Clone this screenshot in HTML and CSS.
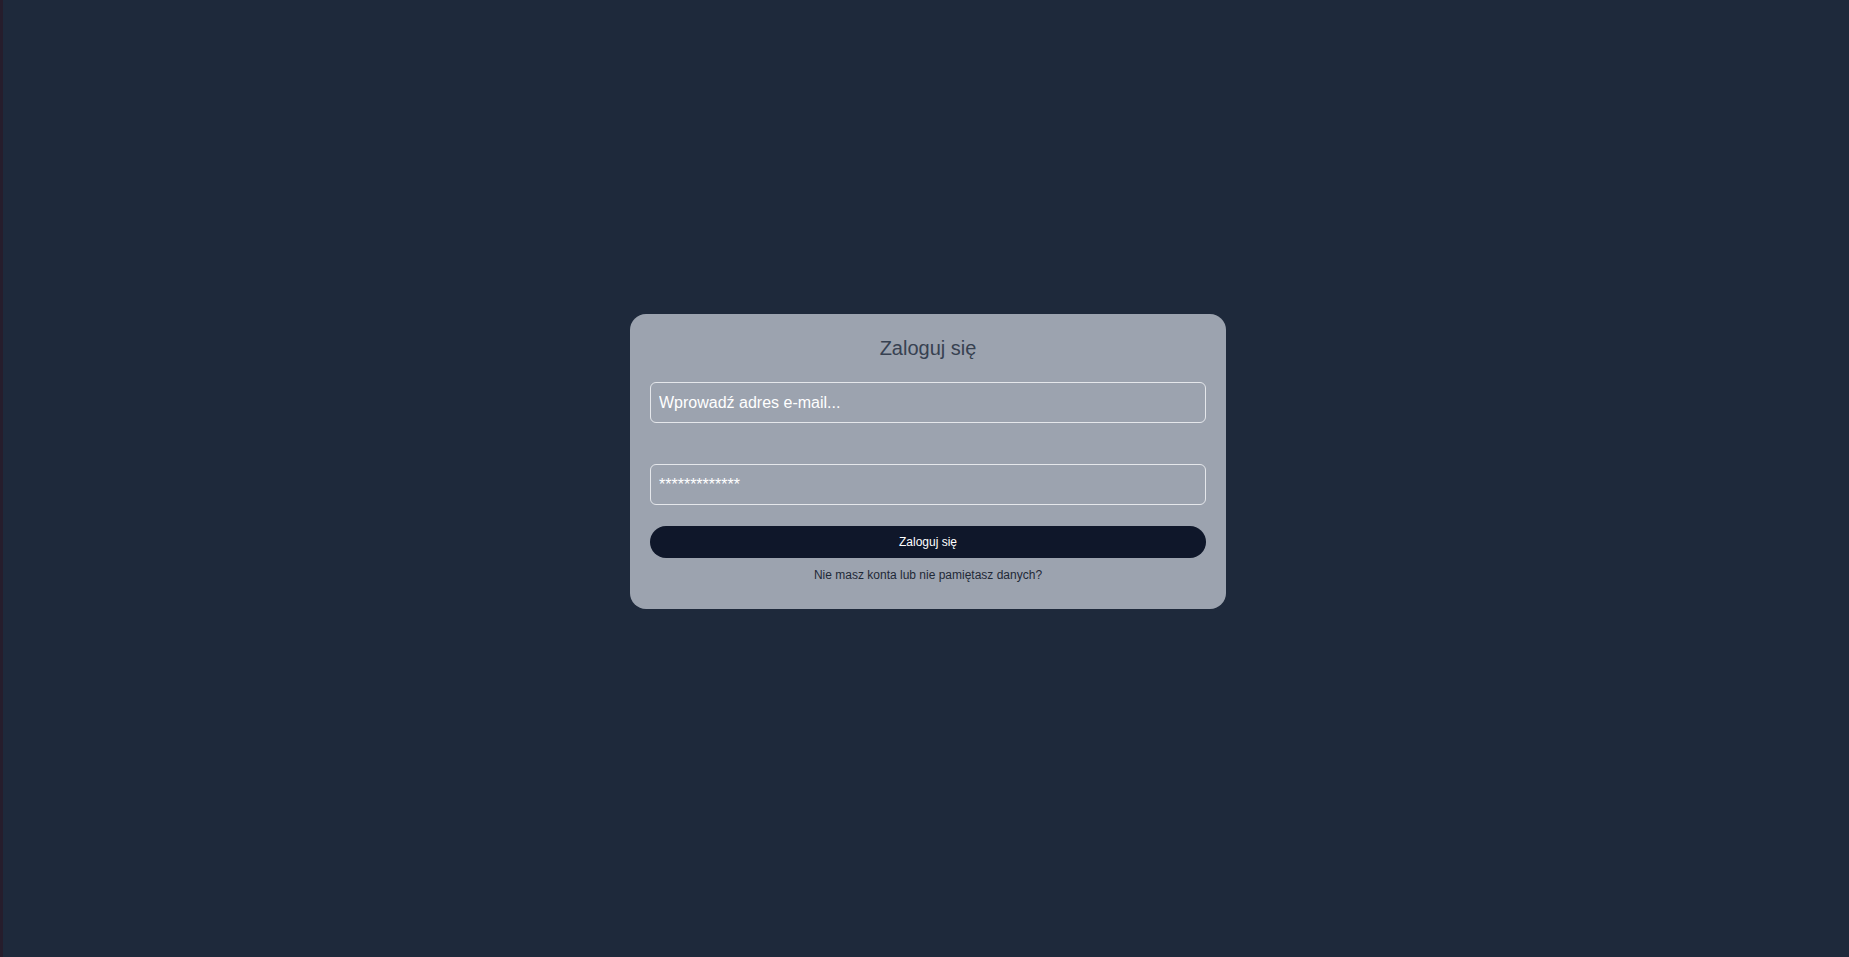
FILE: index.html
```html
<!DOCTYPE html>
<html lang="pl">
<head>
<meta charset="utf-8">
<title>Zaloguj się</title>
<link rel="stylesheet" href="styles.css">
</head>
<body>
<main class="page">
  <form class="card">
    <h2 class="title">Zaloguj się</h2>
    <input class="field field-email" type="email" placeholder="Wprowadź adres e-mail...">
    <input class="field field-password" type="password" placeholder="*************">
    <button class="submit" type="button">Zaloguj się</button>
    <a class="help" href="#">Nie masz konta lub nie pamiętasz danych?</a>
  </form>
</main>
</body>
</html>
```
FILE: styles.css
```css
* { box-sizing: border-box; }
html, body { margin: 0; padding: 0; }
body {
  background: #1e293b;
  border-left: 3px solid #261d2c;
  min-height: 100vh;
  font-family: "Liberation Sans", Arial, sans-serif;
}
.page {
  display: flex;
  justify-content: center;
  align-items: flex-start;
  padding-top: 314px;
  padding-left: 4px;
}
.card {
  width: 596px;
  background: #9ca3af;
  border-radius: 16px;
  padding: 20px 20px 26px;
  display: flex;
  flex-direction: column;
}
.title {
  margin: 0 0 20px;
  font-size: 20px;
  line-height: 28px;
  font-weight: 400;
  color: #374151;
  text-align: center;
}
.field {
  display: block;
  width: 100%;
  height: 41px;
  background: transparent;
  border: 1px solid #e5e7eb;
  border-radius: 6px;
  padding: 0 8px;
  font-family: "Liberation Sans", Arial, sans-serif;
  font-size: 16px;
  color: #ffffff;
  outline: none;
}
.field::placeholder { color: #ffffff; opacity: 1; }
.field-email { margin-bottom: 41px; }
.field-password { margin-bottom: 21px; }
.submit {
  display: block;
  width: 100%;
  height: 32px;
  border: none;
  border-radius: 9999px;
  background: #0f172a;
  color: #ffffff;
  font-family: "Liberation Sans", Arial, sans-serif;
  font-size: 12px;
  cursor: pointer;
}
.help {
  display: block;
  margin-top: 9px;
  font-size: 12px;
  line-height: 16px;
  color: #1f2937;
  text-align: center;
  text-decoration: none;
}
```
